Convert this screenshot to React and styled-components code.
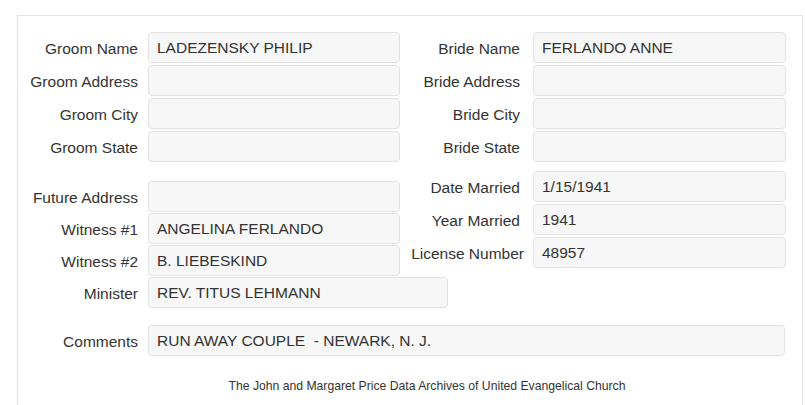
import React from 'react';
import styled, { createGlobalStyle } from 'styled-components';

const GlobalStyle = createGlobalStyle`
  html, body {
    margin: 0;
    padding: 0;
    background: #fff;
    font-family: 'Liberation Sans', Arial, sans-serif;
    color: #333;
  }
`;

const Panel = styled.section`
  margin: 15px 2px 0 17px;
  border: 1px solid #e3e3e3;
  border-bottom: none;
  height: 390px;
  box-sizing: border-box;
  padding-top: 16px;
`;

const Columns = styled.div`
  display: grid;
  grid-template-columns: 384px 1fr;
`;

const Column = styled.div`
  display: flex;
  flex-direction: column;
`;

const Group = styled.div`
  display: flex;
  flex-direction: column;
  gap: ${(p) => p.gap || 2}px;
  margin-top: ${(p) => p.top || 0}px;
`;

const Row = styled.div`
  display: flex;
  align-items: center;
  height: 31px;
`;

const Label = styled.label`
  flex: 0 0 ${(p) => p.width}px;
  text-align: right;
  padding-right: ${(p) => p.gapRight}px;
  box-sizing: border-box;
  font-size: 15.5px;
  white-space: nowrap;
  direction: rtl;
  padding-top: 2px;
  span { direction: ltr; unicode-bidi: isolate; }
`;

const Field = styled.div`
  flex: 0 0 auto;
  width: ${(p) => p.width}px;
  height: 31px;
  box-sizing: border-box;
  background: #f7f7f7;
  border: 1px solid #e2e2e2;
  border-radius: 4px;
  padding: 0 8px;
  display: flex;
  align-items: center;
  font-size: 15.5px;
  color: #333;
  white-space: pre;
`;

const Footer = styled.div`
  text-align: center;
  font-size: 12.2px;
  color: #333;
  margin-top: 23px;
  padding-left: 34px;
`;

const LeftRow = ({ label, value, width = 252 }) => (
  <Row>
    <Label width={130} gapRight={10}>
      <span>{label}</span>
    </Label>
    <Field width={width}>{value}</Field>
  </Row>
);

const RightRow = ({ label, value, pad = 13 }) => (
  <Row>
    <Label width={131} gapRight={pad}>
      <span>{label}</span>
    </Label>
    <Field width={253}>{value}</Field>
  </Row>
);

export default function App() {
  return (
    <>
      <GlobalStyle />
      <Panel>
        <Columns>
          <Column>
            <Group gap={2}>
              <LeftRow label="Groom Name" value="LADEZENSKY PHILIP" />
              <LeftRow label="Groom Address" value="" />
              <LeftRow label="Groom City" value="" />
              <LeftRow label="Groom State" value="" />
            </Group>
            <Group gap={1} top={19}>
              <LeftRow label="Future Address" value="" />
              <LeftRow label="Witness #1" value="ANGELINA FERLANDO" />
              <LeftRow label="Witness #2" value="B. LIEBESKIND" />
              <LeftRow label="Minister" value="REV. TITUS LEHMANN" width={300} />
            </Group>
          </Column>
          <Column>
            <Group gap={2}>
              <RightRow label="Bride Name" value="FERLANDO ANNE" />
              <RightRow label="Bride Address" value="" />
              <RightRow label="Bride City" value="" />
              <RightRow label="Bride State" value="" />
            </Group>
            <Group gap={2} top={9}>
              <RightRow label="Date Married" value="1/15/1941" />
              <RightRow label="Year Married" value="1941" />
              <RightRow label="License Number" value="48957" pad={9} />
            </Group>
          </Column>
        </Columns>
        <Group top={17}>
          <LeftRow label="Comments" value="RUN AWAY COUPLE  - NEWARK, N. J." width={637} />
        </Group>
        <Footer>The John and Margaret Price Data Archives of United Evangelical Church</Footer>
      </Panel>
    </>
  );
}
